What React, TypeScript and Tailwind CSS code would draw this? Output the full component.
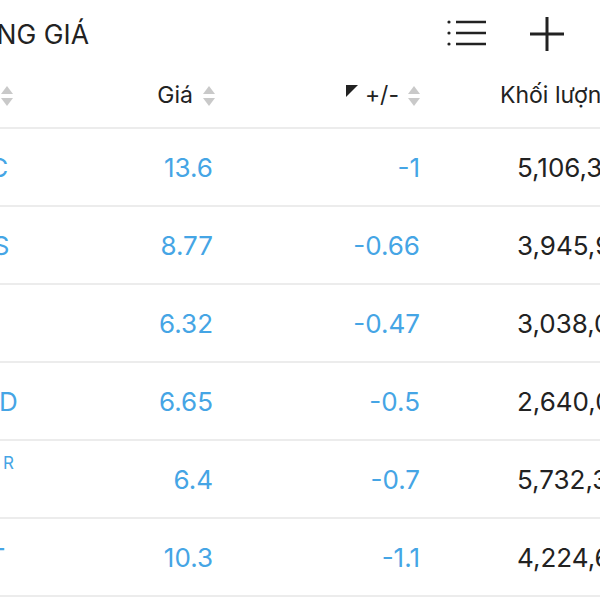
import { Fragment } from "react";

const SortIcon = () => (
  <svg width="14" height="22" viewBox="0 0 14 22" className="flex-shrink-0">
    <path d="M7 1 L13 9 L1 9 Z" fill="#c9c9c9" />
    <path d="M1 13 L13 13 L7 21 Z" fill="#c9c9c9" />
  </svg>
);

const ListIcon = () => (
  <svg width="42" height="30" viewBox="0 0 42 30">
    <circle cx="3" cy="3" r="1.6" fill="#222" />
    <circle cx="3" cy="14" r="1.6" fill="#222" />
    <circle cx="3" cy="25" r="1.6" fill="#222" />
    <path d="M10 3 H40 M10 14 H40 M10 25 H40" stroke="#222" strokeWidth="2.4" />
  </svg>
);

const PlusIcon = () => (
  <svg width="36" height="36" viewBox="0 0 36 36">
    <path d="M18 1 V35 M1 18 H35" stroke="#222" strokeWidth="3" />
  </svg>
);

const rows = [
  { sym: "HQC", price: "13.6", change: "-1", vol: "5,106,300" },
  { sym: "HMS", price: "8.77", change: "-0.66", vol: "3,945,900" },
  { sym: "HAI", price: "6.32", change: "-0.47", vol: "3,038,000" },
  { sym: "MWD", price: "6.65", change: "-0.5", vol: "2,640,000" },
  { sym: "TTF", price: "6.4", change: "-0.7", vol: "5,732,300", right: true },
  { sym: "HQT", price: "10.3", change: "-1.1", vol: "4,224,600" },
];

export default function App() {
  return (
    <div className="w-[600px] h-[600px] overflow-hidden bg-white text-[#222] font-['Inter',sans-serif]">
      <div className="-ml-[60px] w-[760px]">
        <div className="h-[68px] flex items-center justify-between pr-[135px]">
          <span className="pl-[21px] text-[26.5px] pt-[2px]">BẢNG GIÁ</span>
          <div className="flex items-center gap-[41px]">
            <ListIcon />
            <PlusIcon />
          </div>
        </div>

        <div className="grid grid-cols-[150px_135px_205px_270px]">
          <div className="h-[61px] pb-[4px] border-b-2 border-[#ececec] flex items-center justify-end pr-[76px]">
            <SortIcon />
          </div>
          <div className="h-[61px] pb-[4px] border-b-2 border-[#ececec] flex items-center justify-end gap-[9px] pr-[9px] text-[23px]">
            <span>Giá</span>
            <SortIcon />
          </div>
          <div className="h-[61px] pb-[4px] border-b-2 border-[#ececec] flex items-center justify-end gap-[8px] pr-[9px] text-[23px]">
            <span className="flex items-center gap-[7px]">
              <svg width="12" height="12" viewBox="0 0 12 12" className="-mt-[10px]">
                <path d="M0 0 H12 L0 12 Z" fill="#222" />
              </svg>
              +/-
            </span>
            <SortIcon />
          </div>
          <div className="h-[61px] pb-[4px] border-b-2 border-[#ececec] flex items-center pl-[70px] text-[23px] whitespace-nowrap">
            Khối lượng
          </div>

          {rows.map((r) => (
            <Fragment key={r.sym}>
              <div className="h-[78px] border-b-2 border-[#ececec] flex items-center pl-[10px] text-[26px] text-[#45a5e5]">
                <span className="relative">
                  {r.sym}
                  {r.right && (
                    <span className="absolute -right-[15px] -top-[9px] text-[17px]">R</span>
                  )}
                </span>
              </div>
              <div className="h-[78px] border-b-2 border-[#ececec] flex items-center justify-end pr-[12px] text-[26px] text-[#45a5e5]">
                {r.price}
              </div>
              <div className="h-[78px] border-b-2 border-[#ececec] flex items-center justify-end pr-[10px] text-[26px] text-[#45a5e5]">
                {r.change}
              </div>
              <div className="h-[78px] border-b-2 border-[#ececec] flex items-center pl-[87px] text-[26px] whitespace-nowrap">
                {r.vol}
              </div>
            </Fragment>
          ))}
        </div>
      </div>
    </div>
  );
}
